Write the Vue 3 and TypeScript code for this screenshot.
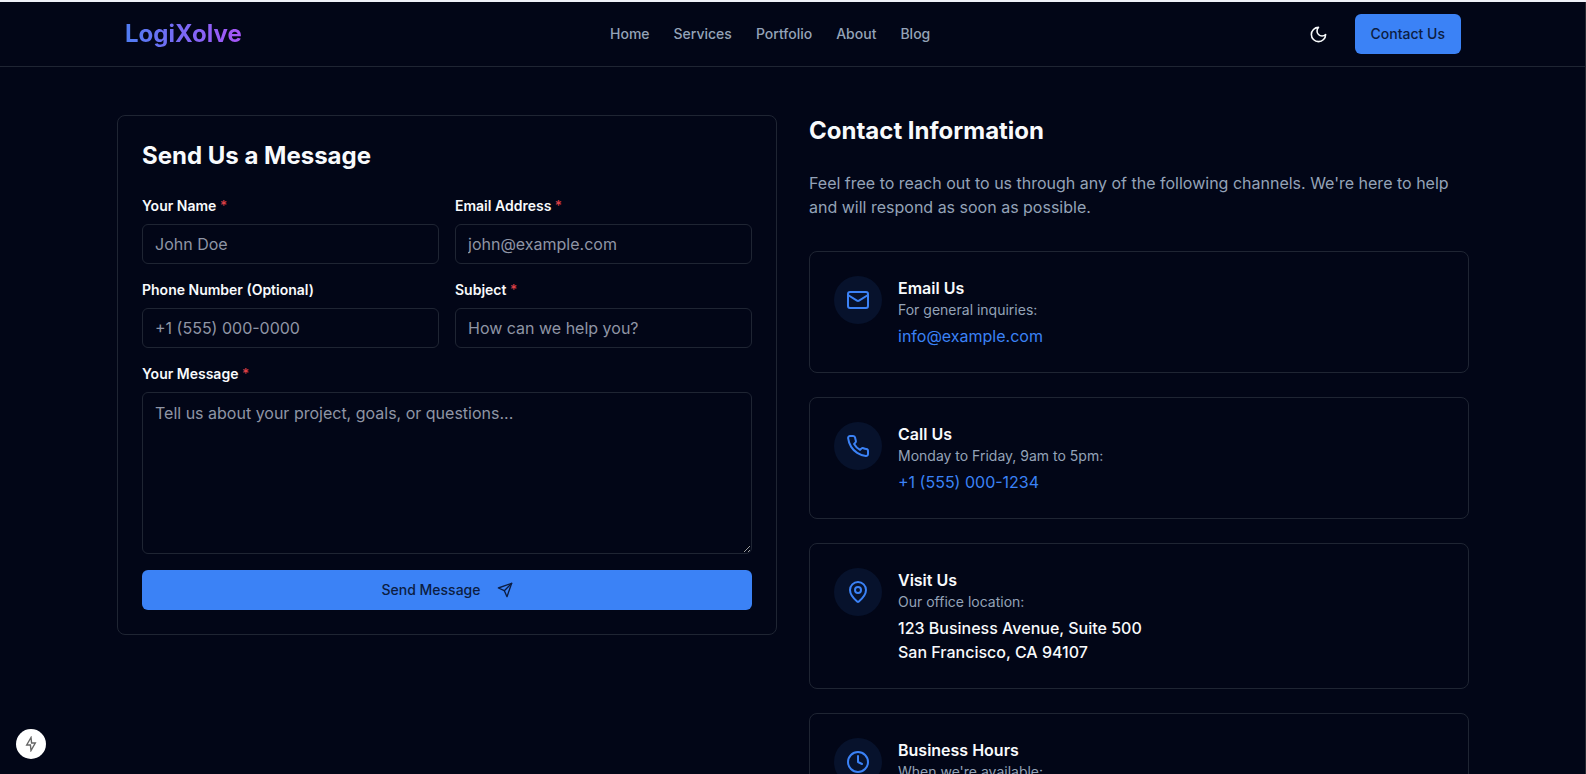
<script setup lang="ts">
import { ref } from 'vue'

interface Field {
  id: string
  label: string
  type: string
  placeholder: string
  required: boolean
}

interface Channel {
  icon: 'mail' | 'phone' | 'pin' | 'clock'
  title: string
  note: string
  link?: { text: string; href: string }
  lines?: string[]
}

const navLinks: string[] = ['Home', 'Services', 'Portfolio', 'About', 'Blog']

const fields: Field[] = [
  { id: 'name', label: 'Your Name', type: 'text', placeholder: 'John Doe', required: true },
  { id: 'email', label: 'Email Address', type: 'email', placeholder: 'john@example.com', required: true },
  { id: 'phone', label: 'Phone Number (Optional)', type: 'tel', placeholder: '+1 (555) 000-0000', required: false },
  { id: 'subject', label: 'Subject', type: 'text', placeholder: 'How can we help you?', required: true },
]

const values = ref<Record<string, string>>({ name: '', email: '', phone: '', subject: '' })
const message = ref('')

const channels: Channel[] = [
  {
    icon: 'mail',
    title: 'Email Us',
    note: 'For general inquiries:',
    link: { text: 'info@example.com', href: 'mailto:info@example.com' },
  },
  {
    icon: 'phone',
    title: 'Call Us',
    note: 'Monday to Friday, 9am to 5pm:',
    link: { text: '+1 (555) 000-1234', href: 'tel:+15550001234' },
  },
  {
    icon: 'pin',
    title: 'Visit Us',
    note: 'Our office location:',
    lines: ['123 Business Avenue, Suite 500', 'San Francisco, CA 94107'],
  },
  { icon: 'clock', title: 'Business Hours', note: "When we're available:" },
]
</script>

<template>
  <div class="page">
    <header class="header">
      <div class="bar">
        <a class="logo" href="#">LogiXolve</a>
        <nav class="nav">
          <a v-for="item in navLinks" :key="item" class="nav-link" href="#">{{ item }}</a>
        </nav>
        <div class="actions">
          <button class="theme" type="button" aria-label="Toggle theme">
            <svg class="icon moon" viewBox="0 0 24 24"><path d="M12 3a6 6 0 0 0 9 9 9 9 0 1 1-9-9Z" /></svg>
          </button>
          <a class="cta" href="#contact">Contact Us</a>
        </div>
      </div>
    </header>

    <main id="contact" class="main">
      <form class="card form" @submit.prevent>
        <h2 class="heading">Send Us a Message</h2>
        <div class="fields">
          <div v-for="f in fields" :key="f.id" class="field">
            <label class="label" :for="f.id">{{ f.label }} <span v-if="f.required" class="star">*</span></label>
            <input :id="f.id" v-model="values[f.id]" class="control" :type="f.type" :placeholder="f.placeholder" />
          </div>
          <div class="field wide">
            <label class="label" for="message">Your Message <span class="star">*</span></label>
            <textarea
              id="message"
              v-model="message"
              class="control area"
              rows="6"
              placeholder="Tell us about your project, goals, or questions..."
            ></textarea>
          </div>
          <button class="send wide" type="submit">
            Send Message
            <svg class="icon plane" viewBox="0 0 24 24"><path d="m22 2-7 20-4-9-9-4Z" /><path d="M22 2 11 13" /></svg>
          </button>
        </div>
      </form>

      <section class="info">
        <h2 class="heading">Contact Information</h2>
        <p class="lead">
          Feel free to reach out to us through any of the following channels. We're here to help and will respond as
          soon as possible.
        </p>
        <div class="channels">
          <article v-for="c in channels" :key="c.title" class="card channel">
            <span class="disc">
              <svg class="icon" viewBox="0 0 24 24">
                <template v-if="c.icon === 'mail'">
                  <rect width="20" height="16" x="2" y="4" rx="2" />
                  <path d="m22 7-8.97 5.7a1.94 1.94 0 0 1-2.06 0L2 7" />
                </template>
                <path
                  v-else-if="c.icon === 'phone'"
                  d="M22 16.92v3a2 2 0 0 1-2.18 2 19.79 19.79 0 0 1-8.63-3.07 19.5 19.5 0 0 1-6-6 19.79 19.79 0 0 1-3.07-8.67A2 2 0 0 1 4.11 2h3a2 2 0 0 1 2 1.72 12.84 12.84 0 0 0 .7 2.81 2 2 0 0 1-.45 2.11L8.09 9.91a16 16 0 0 0 6 6l1.27-1.27a2 2 0 0 1 2.11-.45 12.84 12.84 0 0 0 2.81.7A2 2 0 0 1 22 16.92z"
                />
                <template v-else-if="c.icon === 'pin'">
                  <path
                    d="M20 10c0 4.993-5.539 10.193-7.399 11.799a1 1 0 0 1-1.202 0C9.539 20.193 4 14.993 4 10a8 8 0 0 1 16 0"
                  />
                  <circle cx="12" cy="10" r="3" />
                </template>
                <template v-else>
                  <circle cx="12" cy="12" r="10" />
                  <path d="M12 6v6l4 2" />
                </template>
              </svg>
            </span>
            <div class="details">
              <h3 class="title">{{ c.title }}</h3>
              <p class="note">{{ c.note }}</p>
              <a v-if="c.link" class="link" :href="c.link.href">{{ c.link.text }}</a>
              <address v-if="c.lines" class="address">
                <span v-for="line in c.lines" :key="line">{{ line }}</span>
              </address>
            </div>
          </article>
        </div>
      </section>
    </main>

    <button class="badge" type="button" aria-label="Open developer tools">
      <svg class="icon bolt" viewBox="0 0 16 16"><path d="M8 1.5 3.7 9h3.7l.6 5.5L12.3 7H8.6Z" /></svg>
    </button>
  </div>
</template>

<style>
body {
  margin: 0;
  background: #020617;
}
</style>

<style scoped>
.page,
.page * {
  box-sizing: border-box;
}

.page {
  height: 100vh;
  overflow-y: auto;
  scrollbar-width: none;
  border-top: 2px solid #eef1f8;
  background: #020617;
  color: #f8fafc;
  font-family: Inter, 'Liberation Sans', sans-serif;
  font-size: 16px;
  line-height: 24px;
}

.page::after {
  content: '';
  position: fixed;
  z-index: 2;
  top: 2px;
  right: 0;
  bottom: 0;
  width: 1px;
  background: #262a33;
}

.header {
  position: sticky;
  top: 0;
  z-index: 1;
  border-bottom: 1px solid #1f2533;
  background: #020617;
}

.bar {
  display: flex;
  align-items: center;
  justify-content: space-between;
  height: 64px;
  max-width: 1400px;
  margin: 0 auto;
  padding: 0 32px;
}

.logo {
  font-size: 24px;
  line-height: 32px;
  font-weight: 700;
  text-decoration: none;
  color: transparent;
  background: linear-gradient(to right, #4f7df3, #a855f7);
  background-clip: text;
  -webkit-background-clip: text;
}

.nav {
  display: flex;
  gap: 24px;
}

.nav-link {
  color: #94a3b8;
  font-size: 14px;
  line-height: 20px;
  font-weight: 500;
  text-decoration: none;
}

.actions {
  display: flex;
  align-items: center;
  gap: 16px;
}

.theme {
  display: flex;
  align-items: center;
  justify-content: center;
  width: 40px;
  height: 40px;
  padding: 0;
  border: 0;
  background: none;
  color: #f8fafc;
}

.icon {
  width: 24px;
  height: 24px;
  flex: none;
  fill: none;
  stroke: currentColor;
  stroke-width: 2;
  stroke-linecap: round;
  stroke-linejoin: round;
}

.moon {
  width: 19px;
  height: 19px;
}

.cta,
.send {
  display: flex;
  align-items: center;
  justify-content: center;
  height: 40px;
  padding: 0 16px;
  border: 0;
  border-radius: 6px;
  background: #3b82f6;
  color: #0c1d42;
  font-family: inherit;
  font-size: 14px;
  line-height: 20px;
  font-weight: 500;
  text-decoration: none;
}

.send {
  gap: 16px;
}

.plane {
  width: 16px;
  height: 16px;
}

.main {
  display: grid;
  grid-template-columns: 1fr 1fr;
  align-items: start;
  gap: 32px;
  max-width: 1400px;
  margin: 0 auto;
  padding: 48px 24px;
}

.card {
  padding: 24px;
  border: 1px solid #1f2533;
  border-radius: 8px;
}

.heading {
  margin: 0 0 24px;
  font-size: 24px;
  line-height: 32px;
  font-weight: 700;
}

.fields {
  display: grid;
  grid-template-columns: 1fr 1fr;
  gap: 16px;
}

.wide {
  grid-column: 1 / -1;
}

.field {
  display: flex;
  flex-direction: column;
  gap: 8px;
}

.label {
  font-size: 14px;
  line-height: 20px;
  font-weight: 600;
}

.star {
  color: #dc3f45;
  font-weight: 500;
}

.control {
  width: 100%;
  height: 40px;
  padding: 8px 12px;
  border: 1px solid #1f2533;
  border-radius: 6px;
  background: transparent;
  color: #f8fafc;
  font-family: inherit;
  font-size: 16px;
  line-height: 24px;
}

.area {
  display: block;
  height: auto;
  resize: vertical;
}

.control::placeholder {
  color: #8f95a5;
  opacity: 1;
}

.lead {
  margin: 0 0 32px;
  color: #94a3b8;
}

.channels {
  display: grid;
  gap: 24px;
}

.channel {
  display: flex;
  align-items: flex-start;
  gap: 16px;
}

.disc {
  display: flex;
  align-items: center;
  justify-content: center;
  flex: none;
  width: 48px;
  height: 48px;
  border-radius: 50%;
  background: #07122c;
  color: #3b82f6;
}

.title {
  margin: 0;
  font-size: 16px;
  line-height: 24px;
  font-weight: 600;
}

.note {
  margin: 0 0 4px;
  color: #94a3b8;
  font-size: 14px;
  line-height: 20px;
}

.link {
  display: block;
  color: #3b82f6;
  text-decoration: none;
}

.address {
  display: flex;
  flex-direction: column;
  font-style: normal;
  font-weight: 500;
}

.badge {
  position: fixed;
  left: 16px;
  bottom: 15px;
  display: flex;
  align-items: center;
  justify-content: center;
  width: 30px;
  height: 30px;
  padding: 0;
  border: 0;
  border-radius: 50%;
  background: #ffffff;
  color: #666666;
}

.bolt {
  width: 16px;
  height: 16px;
  stroke-width: 1.4;
  stroke-linejoin: miter;
}
</style>
